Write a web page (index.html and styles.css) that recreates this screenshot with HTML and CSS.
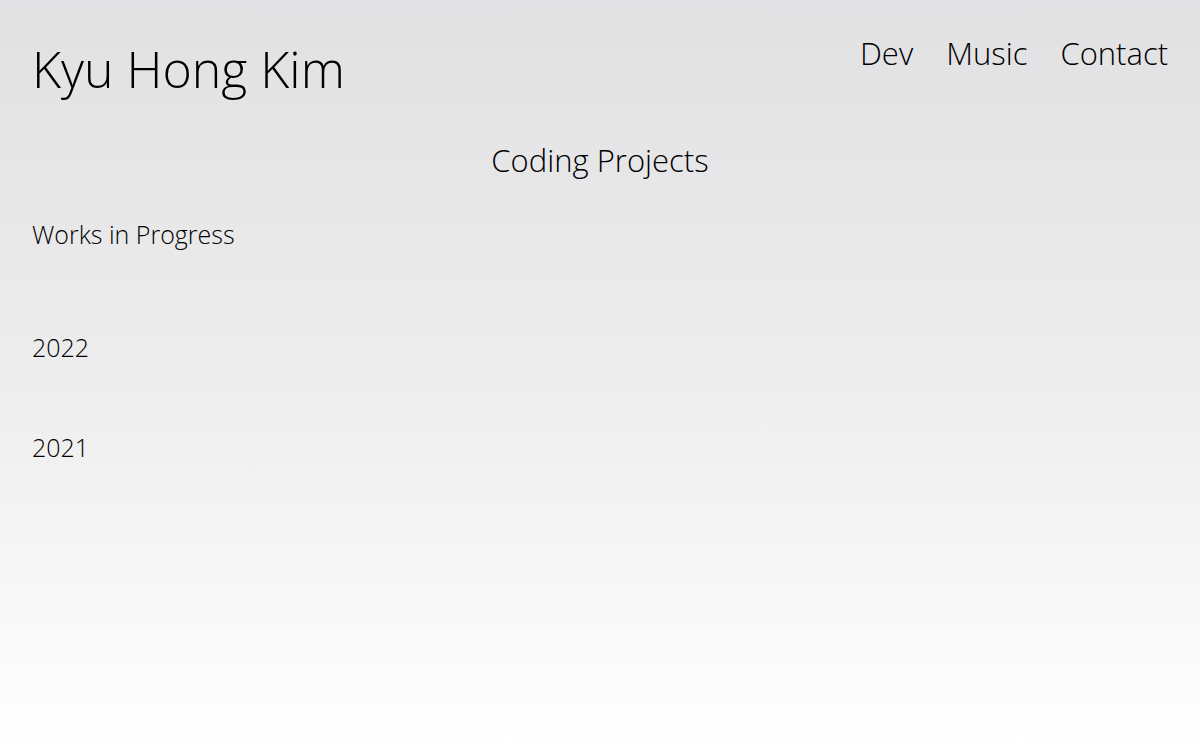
FILE: index.html
```html
<!DOCTYPE html>
<html lang="en">
	<head>
		<meta charset="UTF-8" />
		<meta name="viewport" content="width=device-width, initial-scale=1.0" />
		<title>Kyu Hong Kim - Dev</title>
		<link rel="stylesheet" href="styles.css">
	</head>
	<body>
		<header class="header">
			<h1 class="name">Kyu Hong Kim</h1>
			<nav class="nav">
				<a href="#">Dev</a>
				<a href="#">Music</a>
				<a href="#">Contact</a>
			</nav>
		</header>

		<main class="main">
			<h2 class="title">Coding Projects</h2>

			<section class="group wip">
				<h3>Works in Progress</h3>
			</section>

			<section class="group">
				<h3>2022</h3>
			</section>

			<section class="group">
				<h3>2021</h3>
			</section>
		</main>
	</body>
</html>
```

FILE: styles.css
```css
html {
	min-height: 100%;
	background: linear-gradient(to bottom, #e1e1e3 0%, #ededee 50%, #ffffff 100%);
}
body {
	margin: 0;
	padding: 0 32px;
	font-family: "Open Sans", sans-serif;
	font-weight: 300;
	color: #000;
	min-height: 750px;
}
.header {
	display: flex;
	justify-content: space-between;
	align-items: flex-start;
	padding-top: 34px;
}
.name {
	margin: 0;
	font-size: 50px;
	font-weight: 300;
	line-height: 1.4;
}
.nav {
	display: flex;
	gap: 33px;
	margin-top: -2px;
}
.nav a {
	color: #000;
	text-decoration: none;
	font-size: 31px;
	line-height: 1.4;
}
.title {
	margin: 35px 0 0;
	text-align: center;
	font-size: 31px;
	font-weight: 300;
}
.group {
	margin-top: 30px;
	height: 70px;
}
.group.wip {
	margin-top: 36px;
	height: 83px;
}
.group h3 {
	margin: 0;
	font-size: 25px;
	font-weight: 300;
}
```
